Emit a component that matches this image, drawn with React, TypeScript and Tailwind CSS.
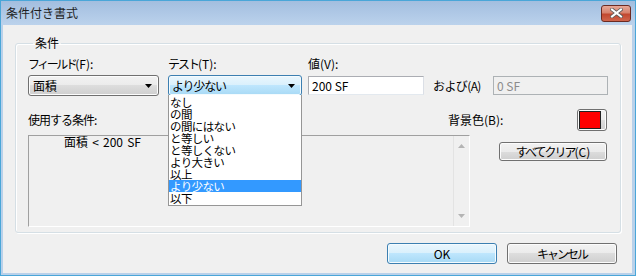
import React from 'react';

const font = { fontFamily: '"Noto Sans CJK JP", "Liberation Sans", sans-serif' };

const btnGrey =
  'border border-[#707070] rounded-[3px] bg-[linear-gradient(#f2f2f2_0%,#ebebeb_50%,#dddddd_50%,#cfcfcf_100%)] shadow-[inset_0_0_0_1px_#fcfcfc]';
const btnBlue =
  'border border-[#3c7fb1] rounded-[3px] bg-[linear-gradient(#eaf6fd_0%,#d9f0fc_50%,#bee6fd_50%,#a7d9f5_100%)] shadow-[inset_0_0_0_1px_#f4fbfe]';

const testItems = ['なし', 'の間', 'の間にはない', 'と等しい', 'と等しくない', 'より大きい', '以上', 'より少ない', '以下'];

function Arrow() {
  return (
    <svg width="7" height="4" viewBox="0 0 7 4">
      <path d="M0 0h7L3.5 4z" fill="#000" />
    </svg>
  );
}

export default function App() {
  return (
    <div
      style={font}
      className="w-[636px] h-[276px] flex flex-col bg-[#b9d1ea] border border-[#4aa6d8] text-[12px] leading-[14px] text-black overflow-hidden"
    >
      {/* title bar */}
      <div className="h-[24px] shrink-0 flex items-center justify-between bg-[linear-gradient(#a3bedf,#bbd2ec)] pl-[5px] pr-[4px]">
        <span className="text-[12px] text-[#1e1e1e]">条件付き書式</span>
        <button className="w-[30px] h-[17px] flex items-center justify-center rounded-[3px] border border-[#6b2a22] bg-[linear-gradient(#e6a898_0%,#d7826d_45%,#c2472f_55%,#d0654c_100%)]">
          <svg width="13" height="10" viewBox="0 0 13 10">
            <path d="M2 1.5l9 7M11 1.5l-9 7" stroke="#5b5b5b" strokeWidth="3.6" strokeLinecap="square" />
            <path d="M2 1.5l9 7M11 1.5l-9 7" stroke="#fff" strokeWidth="2" strokeLinecap="square" />
          </svg>
        </button>
      </div>

      {/* content */}
      <div className="flex-1 mx-[2px] mb-[2px] mr-[3px] bg-[#f0f0f0] pl-[12px] pt-[11px]">
        <fieldset className="w-[606px] border border-[#d5dfe5] rounded-[3px] shadow-[inset_1px_1px_0_#fff,1px_1px_0_#fff] pl-[12px] pb-[5px] pt-[7px]">
          <legend className="ml-[5px] px-[2px] leading-[14px]">条件</legend>

          {/* labels row */}
          <div className="flex h-[14px]">
            <span className="w-[140px]">
              <span className="tracking-[-2.5px]">フィールド</span>(F):
            </span>
            <span className="w-[140px]">
              <span className="tracking-[-2px]">テスト</span>(T):
            </span>
            <span>値(V):</span>
          </div>

          {/* controls row */}
          <div className="flex items-center mt-[4px] h-[21px]">
            <div className={`w-[131px] h-[21px] flex items-center justify-between pl-[4px] pr-[6px] ${btnGrey}`}>
              <span>面積</span>
              <Arrow />
            </div>
            <div className="relative ml-[9px]">
              <div className={`w-[134px] h-[21px] flex items-center justify-between pl-[3px] pr-[6px] ${btnBlue}`}>
                <span className="tracking-[-1.2px]">より少ない</span>
                <Arrow />
              </div>
              <div className="absolute left-0 top-[20px] w-[134px] bg-white border border-[#969696] border-t-0 z-10 pt-[1px] pb-[1px]">
                {testItems.map((t) => (
                  <div
                    key={t}
                    className={`h-[12px] text-[11.5px] leading-[12px] pl-[1px] tracking-[-0.6px] ${t === 'より少ない' ? 'bg-[#3399ff] text-white' : ''}`}
                  >
                    {t}
                  </div>
                ))}
              </div>
            </div>
            <div className="ml-[6px] w-[116px] h-[19px] bg-white border border-[#abadb3] border-b-[#e3e9ef] border-r-[#dbdfe6] flex items-center pl-[3px]">
              200 SF
            </div>
            <span className="ml-[9px] w-[60px] tracking-[-0.6px]">および(A)</span>
            <div className="w-[115px] h-[19px] bg-[#f0f0f0] border border-[#adb2b5] flex items-center pl-[3px] text-[#8c8c8c]">
              0 SF
            </div>
          </div>

          {/* third row */}
          <div className="flex items-center mt-[13px] h-[22px]">
            <span className="w-[420px] tracking-[-1px]">使用する条件:</span>
            <span className="w-[129px]">背景色(B):</span>
            <div className={`w-[30px] h-[22px] flex items-center pl-[1px] ${btnGrey}`}>
              <div className="w-[22px] h-[18px] bg-[#ff0000] border border-[#222]" />
            </div>
          </div>

          {/* fourth row */}
          <div className="flex items-start mt-[4px]">
            <div className="w-[442px] h-[92px] flex border-t border-l border-[#a0a0a0] border-r border-b border-r-white border-b-white">
              <div className="flex-1 pl-[35px] leading-[12px] [word-spacing:1.5px]">面積 &lt; 200 SF</div>
              <div className="w-[16px] border-l border-[#e3e3e3] flex flex-col items-center justify-between py-[8px]">
                <svg width="7" height="4" viewBox="0 0 7 4">
                  <path d="M0 4h7L3.5 0z" fill="#b4b4b4" />
                </svg>
                <svg width="7" height="4" viewBox="0 0 7 4">
                  <path d="M0 0h7L3.5 4z" fill="#b4b4b4" />
                </svg>
              </div>
            </div>
            <button className={`ml-[29px] mt-[7px] w-[108px] h-[19px] flex items-center justify-center ${btnGrey}`}>
              <span className="tracking-[-2px]">すべてクリア</span>(C)
            </button>
          </div>
        </fieldset>

        {/* bottom buttons */}
        <div className="flex justify-end gap-[10px] mt-[10px] pr-[15px]">
          <button className={`w-[110px] h-[21px] flex items-center justify-center ${btnBlue}`}>OK</button>
          <button className={`w-[110px] h-[21px] flex items-center justify-center tracking-[-2px] ${btnGrey}`}>キャンセル</button>
        </div>
      </div>
    </div>
  );
}
